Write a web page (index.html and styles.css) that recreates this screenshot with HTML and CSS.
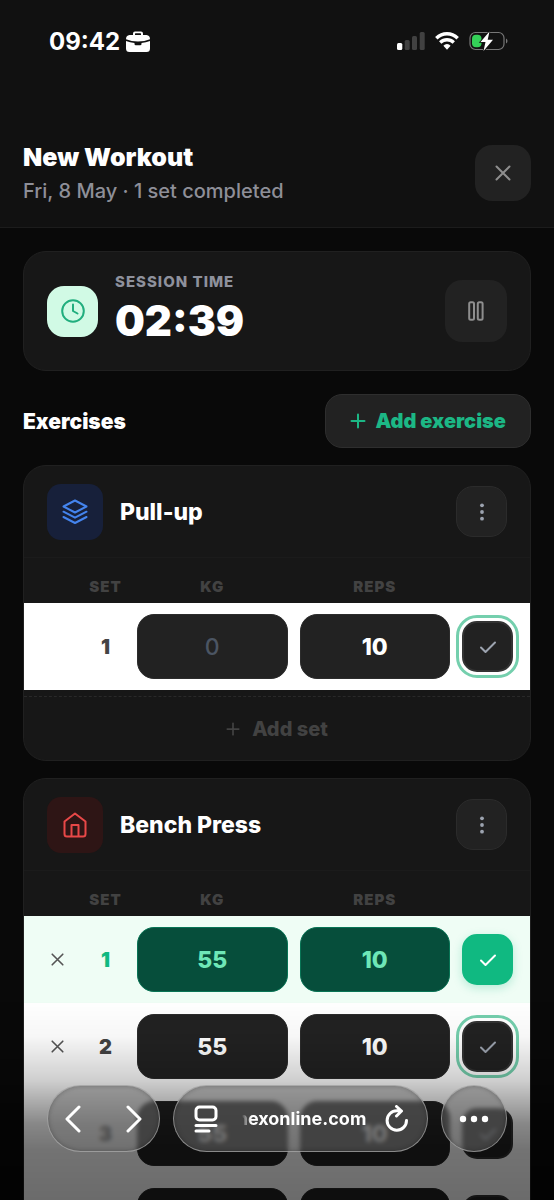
FILE: index.html
```
<!DOCTYPE html>
<html lang="en">
<head>
<meta charset="utf-8">
<meta name="viewport" content="width=device-width, initial-scale=1">
<title>New Workout</title>
<link rel="stylesheet" href="styles.css">
</head>
<body>
<svg class="sprite" aria-hidden="true">
  <symbol id="i-x" viewBox="0 0 16 16"><path d="M1.500 1.500l13 13M14.500 1.500l-13 13"/></symbol>
  <symbol id="i-plus" viewBox="0 0 16 16"><path d="M8 1.500v13M1.500 8h13"/></symbol>
  <symbol id="i-check" viewBox="0 0 18 14"><path d="M2 7.500l4.500 4.500L16 2.500"/></symbol>
  <symbol id="i-dots" viewBox="0 0 6 20"><circle cx="3" cy="3.300" r="1.900"/><circle cx="3" cy="10" r="1.900"/><circle cx="3" cy="16.700" r="1.900"/></symbol>
</svg>
<div class="app">
  <header class="top">
    <div class="status">
      <span class="clock">09:42
        <svg class="case" viewBox="0 0 24 21" aria-hidden="true"><path fill-rule="evenodd" fill="#fff" d="M7 4V2.500Q7 .5 9 .5h6q2 0 2 2V4h3.500Q24 4.500 24 8.300 18.500 10.500 12 10.500T0 8.300Q0 4.500 3.500 4zM9 4h6V2.800q0-.5-.5-.5h-5q-.5 0-.5.5z"/><path fill="#fff" d="M0 10q4 1.700 8.500 2.100V13q0 1.300 1.300 1.300h4.400q1.300 0 1.300-1.300v-.9Q20 11.700 24 10v7.500q0 3.500-3.500 3.500h-17Q0 21 0 17.500z"/></svg>
      </span>
      <span class="signals">
        <svg width="28" height="18" viewBox="0 0 28 18" aria-label="Signal"><rect y="11" width="5.300" height="7" rx="1.500" fill="#fff"/><rect x="7.700" y="8" width="5" height="10" rx="1.500" fill="#414141"/><rect x="15" y="4" width="5" height="14" rx="1.500" fill="#414141"/><rect x="22.700" y="0" width="5" height="18" rx="1.500" fill="#414141"/></svg>
        <svg width="24" height="18" viewBox="0 0 24 18" aria-label="Wi-Fi"><g fill="none" stroke="#fff" stroke-width="3.400"><path d="M1.300 6.300Q6 1.700 12 1.700t10.700 4.600"/><path d="M5.200 10.500Q8.200 7.700 12 7.700t6.800 2.800"/></g><path fill="#fff" d="M8.400 13.700q1.400-1.700 3.600-1.700t3.600 1.700L12 17.800z"/></svg>
        <svg width="39" height="20" viewBox="0 0 39 20" aria-label="Battery charging"><rect x="1" y="1.500" width="34" height="17" rx="5.500" fill="none" stroke="#777" stroke-width="1.200"/><path d="M37 7.500q1.500.8 1.500 2.500T37 12.500z" fill="#777"/><rect x="3" y="3.700" width="9.500" height="12.600" rx="4" fill="#34d158"/><path d="M20.500.5L11.500 11h5l-2 9 9.500-11.300h-5.300z" fill="#fff" stroke="#111" stroke-width="1.600" paint-order="stroke"/></svg>
      </span>
    </div>
    <div class="title-row">
      <div>
        <h1>New Workout</h1>
        <p class="sub">Fri, 8 May · 1 set completed</p>
      </div>
      <button class="close" aria-label="Close"><svg class="line" width="16" height="16"><use href="#i-x"/></svg></button>
    </div>
  </header>

  <main>
    <section class="card session">
      <span class="session-icon"><svg class="line" width="24" height="24" viewBox="0 0 24 24"><circle cx="12" cy="12" r="10.800"/><path d="M12 5.500V12l4.500 2.500"/></svg></span>
      <div class="session-text">
        <p class="label">SESSION TIME</p>
        <p class="timer">02:39</p>
      </div>
      <button class="pause" aria-label="Pause"><svg class="line" width="16" height="20" viewBox="0 0 16 20"><rect x="1.200" y="1.200" width="4.800" height="17.600" rx="1.500"/><rect x="9.800" y="1.200" width="4.800" height="17.600" rx="1.500"/></svg></button>
    </section>

    <div class="list-head">
      <h2>Exercises</h2>
      <button class="add-exercise"><svg class="line" width="16" height="16"><use href="#i-plus"/></svg>Add exercise</button>
    </div>

    <section class="card">
      <div class="ex-head">
        <span class="ex-icon blue"><svg class="line" width="26" height="26" viewBox="0 0 26 26"><path d="M13 1.500L24.500 7.500 13 13.500 1.500 7.500zM1.500 12.700l11.500 6 11.500-6M1.500 18l11.500 6 11.500-6"/></svg></span>
        <h3>Pull-up</h3>
        <button class="more" aria-label="Pull-up options"><svg width="6" height="20"><use href="#i-dots"/></svg></button>
      </div>
      <table>
        <thead><tr><td></td><th>SET</th><th>KG</th><th>REPS</th><td></td></tr></thead>
        <tbody>
          <tr class="next"><td></td><th>1</th>
            <td><input class="num" aria-label="Set 1 kg" placeholder="0"></td>
            <td><input class="num" aria-label="Set 1 reps" value="10"></td>
            <td><label class="check"><input type="checkbox" aria-label="Set 1 done"><svg class="line" width="18" height="14"><use href="#i-check"/></svg></label></td></tr>
        </tbody>
      </table>
      <div class="foot"><button class="add-set"><svg class="line" width="14" height="14"><use href="#i-plus"/></svg>Add set</button></div>
    </section>

    <section class="card">
      <div class="ex-head">
        <span class="ex-icon red"><svg class="line" width="24" height="26" viewBox="0 0 24 26"><path d="M1.500 9.500L12 1.500l10.500 8V22q0 2.500-2.500 2.500H4Q1.500 24.500 1.500 22zM8.500 24.500V13h7v11.500"/></svg></span>
        <h3>Bench Press</h3>
        <button class="more" aria-label="Bench Press options"><svg width="6" height="20"><use href="#i-dots"/></svg></button>
      </div>
      <table>
        <thead><tr><td></td><th>SET</th><th>KG</th><th>REPS</th><td></td></tr></thead>
        <tbody>
          <tr class="done"><td><button class="remove" aria-label="Remove set 1"><svg class="line" width="13" height="13"><use href="#i-x"/></svg></button></td><th>1</th>
            <td><input class="num" aria-label="Set 1 kg" value="55"></td>
            <td><input class="num" aria-label="Set 1 reps" value="10"></td>
            <td><label class="check"><input type="checkbox" aria-label="Set 1 done" checked><svg class="line" width="18" height="14"><use href="#i-check"/></svg></label></td></tr>
          <tr class="next"><td><button class="remove" aria-label="Remove set 2"><svg class="line" width="13" height="13"><use href="#i-x"/></svg></button></td><th>2</th>
            <td><input class="num" aria-label="Set 2 kg" value="55"></td>
            <td><input class="num" aria-label="Set 2 reps" value="10"></td>
            <td><label class="check"><input type="checkbox" aria-label="Set 2 done"><svg class="line" width="18" height="14"><use href="#i-check"/></svg></label></td></tr>
          <tr><td></td><th>3</th>
            <td><input class="num" aria-label="Set 3 kg" value="55"></td>
            <td><input class="num" aria-label="Set 3 reps" value="10"></td>
            <td><label class="check"><input type="checkbox" aria-label="Set 3 done"><svg class="line" width="18" height="14"><use href="#i-check"/></svg></label></td></tr>
          <tr><td></td><th></th>
            <td><input class="num" aria-label="Set 4 kg"></td>
            <td><input class="num" aria-label="Set 4 reps"></td>
            <td><label class="check"><input type="checkbox" aria-label="Set 4 done"></label></td></tr>
        </tbody>
      </table>
    </section>
  </main>
</div>

<div class="fade"></div>
<nav class="browser">
  <div class="glass history">
    <button aria-label="Back"><svg width="16" height="28" viewBox="0 0 16 28"><path d="M14 2L2 14l12 12"/></svg></button>
    <button aria-label="Forward"><svg width="16" height="28" viewBox="0 0 16 28"><path d="M2 2l12 12L2 26"/></svg></button>
  </div>
  <div class="glass address">
    <button aria-label="Page menu"><svg width="24" height="28" viewBox="0 0 24 28"><rect x="2" y="2" width="20" height="13" rx="3.500"/><path d="M2 20.500h20M2 26h13"/></svg></button>
    <a class="url" href="#">nexonline.com</a>
    <button aria-label="Reload"><svg width="24" height="28" viewBox="0 0 24 28"><path d="M21.500 15.500a9.700 9.700 0 1 1-9.500-9.700h4M11.500 1.500l5 4.500-5 5"/></svg></button>
  </div>
  <button class="glass menu" aria-label="More"><svg width="30" height="8" viewBox="0 0 30 8"><circle cx="4" cy="4" r="3.200"/><circle cx="15" cy="4" r="3.200"/><circle cx="26" cy="4" r="3.200"/></svg></button>
</nav>
</body>
</html>
```
FILE: styles.css
```
* { box-sizing: border-box; margin: 0; padding: 0; }
body {
  background: #090909;
  color: #fff;
  font-family: Inter, "Liberation Sans", sans-serif;
}
button, input { font: inherit; color: inherit; border: 0; background: none; }
button { display: flex; align-items: center; justify-content: center; }
svg { display: block; flex: none; }
.sprite { display: none; }
.line { fill: none; stroke: currentColor; stroke-width: 2; stroke-linecap: round; stroke-linejoin: round; }

.app { height: 100vh; overflow: hidden; }
.top { background: #111; border-bottom: 1px solid #1c1c1c; padding: 26px 23px 22px; }
.status {
  display: flex;
  align-items: center;
  justify-content: space-between;
  padding: 0 23px 0 26px;
  height: 30px;
}
.clock { display: flex; align-items: center; gap: 6px; font-size: 24px; font-weight: 700; }
.case { width: 24px; height: 21px; }
.signals { display: flex; align-items: center; gap: 10px; }
.title-row {
  display: flex;
  align-items: center;
  justify-content: space-between;
  margin-top: 85px;
}
h1 { font-size: 25px; line-height: 32px; font-weight: 900; }
.sub { font-size: 20px; line-height: 28px; margin-top: 4px; font-weight: 500; color: #8e8f98; }
.close { width: 56px; height: 56px; border-radius: 17px; background: #222; color: #8e8e8e; }

main { display: grid; gap: 17px; padding: 23px; }
.card { background: #171717; border: 1px solid #202020; border-radius: 23px; overflow: hidden; }
.session { display: flex; align-items: center; gap: 17px; height: 120px; padding: 0 23px; }
.session-icon {
  display: grid;
  place-items: center;
  width: 51px;
  height: 51px;
  border-radius: 17px;
  background: #d1fae5;
  color: #21ae7e;
}
.session-text { flex: 1; padding-bottom: 4px; }
.label { font-size: 15px; line-height: 18px; font-weight: 800; letter-spacing: 1px; color: #8e919c; }
.timer { font-size: 42px; line-height: 50px; font-weight: 900; margin-top: 5px; }
.pause { width: 62px; height: 62px; border-radius: 17px; background: #222; color: #8e8e8e; }

.list-head { display: flex; align-items: center; justify-content: space-between; margin-top: 6px; }
h2 { font-size: 21px; font-weight: 900; }
.add-exercise {
  gap: 10px;
  height: 54px;
  padding: 0 24px;
  border: 1px solid #2e2e2e;
  border-radius: 17px;
  background: #222;
  color: #1cb785;
  font-size: 20px;
  font-weight: 900;
}

.ex-head {
  display: flex;
  align-items: center;
  gap: 17px;
  height: 92px;
  padding: 0 23px;
  border-bottom: 1px solid #1b1b1b;
}
.ex-icon { display: grid; place-items: center; width: 56px; height: 56px; border-radius: 14px; }
.blue { background: #17203a; color: #4484ee; }
.red { background: #2e1515; color: #e84848; }
h3 { flex: 1; font-size: 23px; font-weight: 800; }
.more { width: 51px; height: 51px; border-radius: 17px; background: #222; border: 1px solid #2b2b2b; }
.more svg { fill: #9ca3af; }

table, thead, tbody { display: block; }
tr {
  display: grid;
  grid-template-columns: 33px 39px 1fr 1fr 51px;
  gap: 12px;
  align-items: center;
  padding: 0 17px;
}
th { text-align: center; }
thead tr { height: 45px; padding-top: 12px; }
thead th { font-size: 15px; font-weight: 900; letter-spacing: 1px; color: #424242; }
tbody tr { height: 87px; background: #fff; }
tbody th { font-size: 20px; font-weight: 900; color: #444; }
.num {
  display: block;
  width: 100%;
  height: 65px;
  border-radius: 17px;
  border: 1px solid #2c2c2c;
  background: #222;
  text-align: center;
  font-size: 23px;
  font-weight: 800;
}
.num::placeholder { color: #4b5563; opacity: 1; font-weight: 500; }
.remove { width: 33px; height: 33px; color: #555; }
.check {
  display: grid;
  place-items: center;
  width: 51px;
  height: 51px;
  border-radius: 15px;
  border: 2px solid #333;
  background: #222;
  color: #9ca3af;
}
.check input { appearance: none; grid-area: 1 / 1; width: 100%; height: 100%; }
.check svg { grid-area: 1 / 1; }
.next .check { outline: 3px solid #74cfad; outline-offset: 3px; }
.done { background: #effdf5; }
.done th { color: #10b981; }
.done .num { background: #064e3b; border-color: #087455; color: #6ee7b7; }
.done .check { background: #10b981; border-color: #10b981; color: #fff; box-shadow: 0 3px 10px #10b98140; }

.foot { padding-top: 6px; }
.add-set {
  width: 100%;
  height: 64px;
  gap: 12px;
  border-top: 1px dashed #292929;
  color: #424242;
  font-size: 20px;
  font-weight: 800;
}

.fade {
  position: fixed;
  inset: auto 0 0 0;
  height: 200px;
  pointer-events: none;
  background: linear-gradient(#0000, #00000008 18%, #00000030 40%, #00000078 62%, #0000008c 75%, #00000094);
}
.browser {
  position: fixed;
  inset: auto 0 48px 0;
  display: flex;
  gap: 13px;
  padding: 0 47px;
}
.glass {
  display: flex;
  align-items: center;
  height: 67px;
  border-radius: 34px;
  border: 1px solid #b4b4b4a0;
  background: #6f6f6f88;
  backdrop-filter: blur(2px);
  box-shadow: inset 0 0 5px #0004;
}
.glass svg { fill: none; stroke: #fff; stroke-width: 3; stroke-linecap: round; stroke-linejoin: round; }
.history { width: 113px; justify-content: space-between; padding: 0 17px; }
.address { flex: 1; justify-content: space-between; padding: 0 18px 0 20px; }
.url {
  color: #fff;
  font-size: 18px;
  font-weight: 700;
  text-decoration: none;
  mask-image: linear-gradient(90deg, #0000 5px, #000 14px);
}
.menu { width: 66px; justify-content: center; }
.menu svg { fill: #fff; stroke: none; }
```
